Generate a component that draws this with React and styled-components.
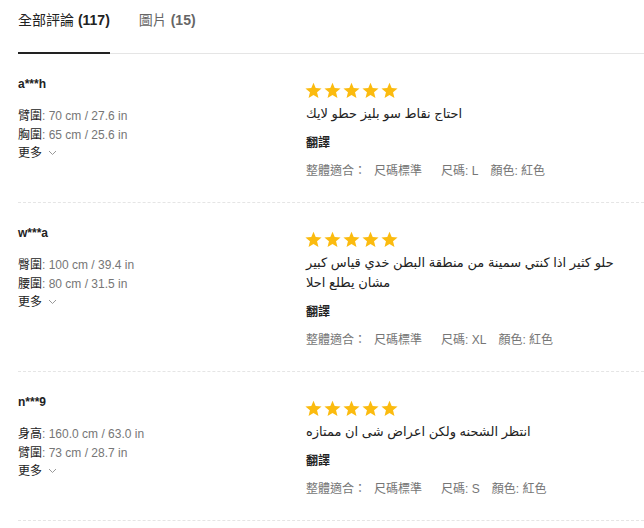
import React from 'react'
import styled, { createGlobalStyle } from 'styled-components'

const GlobalStyle = createGlobalStyle`
  body {
    margin: 0;
    background: #fff;
    font-family: 'Liberation Sans', 'Noto Sans CJK TC', 'DejaVu Sans', sans-serif;
    color: #222;
  }
`

const reviews = [
  {
    user: 'a***h',
    attrs: [['臂圍', '70 cm / 27.6 in'], ['胸圍', '65 cm / 25.6 in']],
    text: 'احتاج نقاط سو بليز حطو لايك',
    size: 'L',
  },
  {
    user: 'w***a',
    attrs: [['臀圍', '100 cm / 39.4 in'], ['腰圍', '80 cm / 31.5 in']],
    text: 'حلو كثير اذا كنتي سمينة من منطقة البطن خدي قياس كبير مشان يطلع احلا',
    size: 'XL',
  },
  {
    user: 'n***9',
    attrs: [['身高', '160.0 cm / 63.0 in'], ['臂圍', '73 cm / 28.7 in']],
    text: 'انتظر الشحنه ولكن اعراض شى ان ممتازه',
    size: 'S',
  },
]

export default function App() {
  return (
    <Page>
      <GlobalStyle />
      <Tabs>
        <Tab $active>全部評論 <b>(117)</b></Tab>
        <Tab>圖片 <b>(15)</b></Tab>
      </Tabs>
      {reviews.map((r) => (
        <Row key={r.user}>
          <UserCol>
            <User>{r.user}</User>
            <Attrs>
              {r.attrs.map(([k, v]) => (
                <Attr key={k}>
                  <Label>{k}</Label>: {v}
                </Attr>
              ))}
              <More>
                更多
                <svg width="9" height="6" viewBox="0 0 9 6">
                  <polyline points="1,1 4.5,4.5 8,1" fill="none" stroke="#999" strokeWidth="1" />
                </svg>
              </More>
            </Attrs>
          </UserCol>
          <ReviewCol>
            <Stars>
              {[0, 1, 2, 3, 4].map((i) => (
                <svg key={i} width="17" height="17" viewBox="0 0 24 24">
                  <polygon
                    points="12,1 15.1,8.6 23.4,9.2 17,14.5 19,22.7 12,18.3 5,22.7 7,14.5 0.6,9.2 8.9,8.6"
                    fill="#fbbb0f"
                  />
                </svg>
              ))}
            </Stars>
            <Comment>{r.text}</Comment>
            <Translate>翻譯</Translate>
            <Meta>
              <MetaItem $gap={19}>
                整體適合：<FitValue>尺碼標準</FitValue>
              </MetaItem>
              <MetaItem $gap={12}>尺碼: {r.size}</MetaItem>
              <MetaItem>顏色: 紅色</MetaItem>
            </Meta>
          </ReviewCol>
        </Row>
      ))}
    </Page>
  )
}

const Page = styled.div`
  padding-left: 18px;
`

const Tabs = styled.div`
  display: flex;
  border-bottom: 1px solid #e5e5e5;
`

const Tab = styled.div`
  font-size: 14px;
  line-height: 16px;
  padding: 12px 0 24px;
  margin-right: 29px;
  margin-bottom: -1px;
  color: ${(p) => (p.$active ? '#222' : '#666')};
  border-bottom: 2px solid ${(p) => (p.$active ? '#222' : 'transparent')};
  b {
    font-weight: bold;
  }
`

const Row = styled.div`
  display: grid;
  grid-template-columns: 288px 1fr;
  padding: 22px 0 23px;
  border-bottom: 1px dashed #e5e5e5;
`

const UserCol = styled.div`
  display: flex;
  flex-direction: column;
  padding-top: 1px;
`

const User = styled.div`
  font-size: 12px;
  line-height: 14px;
  font-weight: bold;
  color: #222;
`

const Attrs = styled.div`
  margin-top: 16px;
  font-size: 12px;
  line-height: 18.5px;
  color: #767676;
`

const Attr = styled.div``

const Label = styled.span`
  color: #222;
`

const More = styled.div`
  display: flex;
  align-items: center;
  gap: 6px;
  color: #222;
`

const ReviewCol = styled.div`
  padding: 6px 20px 0 0;
  display: flex;
  flex-direction: column;
`

const Stars = styled.div`
  display: flex;
  gap: 2px;
  height: 18px;
  margin-left: -1px;
`

const Comment = styled.div`
  margin-top: 4px;
  font-size: 13px;
  line-height: 20px;
  color: #222;
  max-width: 318px;
`

const Translate = styled.div`
  margin-top: 11px;
  font-size: 12px;
  line-height: 16px;
  font-weight: bold;
  color: #222;
`

const Meta = styled.div`
  display: flex;
  margin-top: 12px;
  font-size: 12px;
  line-height: 16px;
  color: #767676;
`

const MetaItem = styled.span`
  margin-right: ${(p) => p.$gap || 0}px;
  white-space: pre;
`

const FitValue = styled.span`
  margin-left: 8px;
`
